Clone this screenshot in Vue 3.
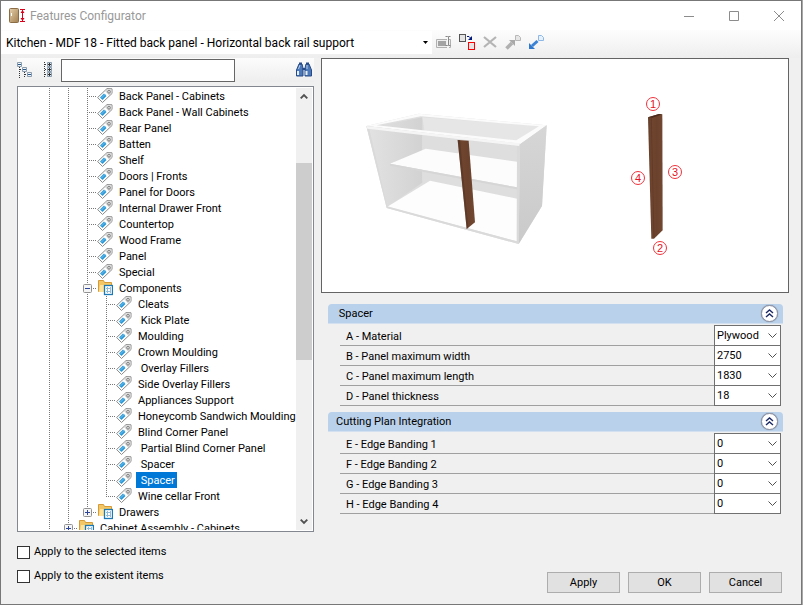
<template>
  <div class="window">
    <header class="title-bar">
      <svg class="app-icon" viewBox="0 0 18 16">
        <defs>
          <linearGradient id="door" x1="0" y1="0" x2="1" y2="1">
            <stop offset="0" stop-color="#e3cfab" />
            <stop offset="1" stop-color="#a37f4f" />
          </linearGradient>
        </defs>
        <rect x="0.5" y="0.5" width="9" height="14" rx="1" fill="url(#door)" stroke="#8a6c45" />
        <path d="M2.500 5v3" stroke="#fff" />
        <path d="M11 1.500h5M11 13.500h5M13.500 2v12" stroke="#d9001b" fill="none" />
        <path d="M11.500 5l2-3 2 3zM11.500 10l2 3 2-3z" fill="#d9001b" />
      </svg>
      <h1>Features Configurator</h1>
      <div class="window-buttons">
        <button aria-label="Minimize"><svg viewBox="0 0 10 10"><path d="M0 5.500h10" /></svg></button>
        <button aria-label="Maximize"><svg viewBox="0 0 10 10"><path d="M.5.5h9v9h-9z" /></svg></button>
        <button aria-label="Close"><svg viewBox="0 0 10 10"><path d="M0 0l10 10M10 0L0 10" /></svg></button>
      </div>
    </header>

    <div class="toolbar">
      <div class="config">
        <select v-model="config" aria-label="Configuration">
          <option>Kitchen - MDF 18 - Fitted back panel - Horizontal back rail support</option>
        </select>
        <svg viewBox="0 0 5 3"><path d="M0 0h5L2.500 3z" /></svg>
      </div>
      <button class="tool" aria-label="Rename">
        <svg viewBox="0 0 18 18">
          <path d="M12 5.500H1.500v8H12M14 13.500h1.500v-8H14" fill="#eee" stroke="#b0b0b0" />
          <rect x="3" y="7" width="8" height="5" fill="#a3a3a3" />
          <path d="M10.500 2.500h2l.5.500.5-.500h2M13.500 3v8M10.500 11.500h2l.5-.500.5.500h2" fill="none" stroke="#888" />
        </svg>
      </button>
      <button class="tool" aria-label="Replace">
        <svg viewBox="0 0 18 18">
          <rect x="1.500" y="0.500" width="6" height="7" fill="#e4e4e4" stroke="#555" />
          <rect x="10.500" y="8.500" width="6" height="7" fill="#e4e4e4" stroke="#f00" />
          <path d="M9 2.500h2l2 2" fill="none" stroke="#00187c" />
          <path d="M14 2v4h-4z" fill="#00187c" />
        </svg>
      </button>
      <button class="tool" aria-label="Delete">
        <svg viewBox="0 0 18 18"><path d="M3 3l12 10M15 3L3 13" stroke="#b4b4b4" stroke-width="2.200" /></svg>
      </button>
      <button class="tool" aria-label="Export">
        <svg viewBox="0 0 18 18">
          <path d="M2.500 14.500L8 9" stroke="#b0b0b0" stroke-width="3.500" />
          <path d="M5 6h6v6z" fill="#a9a9a9" />
          <path d="M11.500 1.500h3l2 2v3h-5z" fill="#e6e6e6" stroke="#b8b8b8" />
        </svg>
      </button>
      <button class="tool" aria-label="Import">
        <svg viewBox="0 0 18 18">
          <path d="M5 12l5.500-5" stroke="#3b83d6" stroke-width="3" />
          <path d="M2 9v6h6z" fill="#2f78ce" />
          <path d="M11.500 1.500h3l2 2v3h-5z" fill="#e6f1fc" stroke="#8db8e6" />
        </svg>
      </button>
    </div>

    <main class="content">
      <section class="left">
        <div class="search-bar">
          <button class="tool" aria-label="Collapse tree">
            <svg viewBox="0 0 18 18">
              <path d="M2.500 6v11M3 8.500h3M7.500 11v6M8 13.500h3" fill="none" stroke="#333" stroke-dasharray="1 1" />
              <g fill="#eef4fa" stroke="#8a9cab">
                <path d="M.5 1.500h4v4h-4zM5.500 6.500h4v4h-4zM10.500 11.500h4v4h-4z" />
              </g>
              <path d="M1 3.500h3M6 8.500h3M11 13.500h3" stroke="#245a8c" />
            </svg>
          </button>
          <button class="tool" aria-label="Expand tree">
            <svg viewBox="0 0 18 18">
              <path d="M5.500 1v16M6 3.500h3M6 8.500h3M6 13.500h3" fill="none" stroke="#333" stroke-dasharray="1 1" />
              <g fill="#dce6ee" stroke="#8a9cab">
                <path d="M8.500 1.500h4v4h-4zM8.500 6.500h4v4h-4zM8.500 11.500h4v4h-4z" />
              </g>
              <path d="M9 3.500h3M10.500 2v3M9 8.500h3M10.500 7v3M9 13.500h3M10.500 12v3" stroke="#333" />
            </svg>
          </button>
          <input v-model="search" type="text" aria-label="Search" />
          <button class="tool find" aria-label="Find">
            <svg viewBox="0 0 18 18">
              <path d="M4 3h3l1 4v8H1.500V9zM11 3h3l2.500 6v6H10V7z" fill="#4d79b8" stroke="#274b86" />
              <path d="M4 2.500h3M11 2.500h3M7.500 8h3" stroke="#274b86" stroke-width="2" />
              <path d="M3 10v4M11.500 10v4" stroke="#e4effc" stroke-width="2" />
              <path d="M5 4L3.500 8M12 4v4" stroke="#b7cfee" />
            </svg>
          </button>
        </div>

        <div class="tree">
          <ul>
            <li v-for="(node, index) in nodes" :key="index">
              <span
                v-for="depth in node.level"
                :key="depth"
                class="guide"
                :class="{ branch: depth === node.level, end: depth === node.level && node.last }"
              >
                <svg v-if="node.folder && depth === node.level" class="expander" viewBox="0 0 9 9">
                  <rect x="0.500" y="0.500" width="8" height="8" rx="1" fill="#f5f5f5" stroke="#919191" />
                  <path :d="node.open ? 'M2 4.500h5' : 'M2 4.500h5M4.500 2v5'" stroke="#2c4599" />
                </svg>
              </span>
              <svg v-if="node.folder" class="node-icon" viewBox="0 0 16 16">
                <path d="M1.500 11.500v-11h5l1 2h7v9z" fill="#f3c765" stroke="#d59b37" />
                <path d="M2 12l1-7h11v7z" fill="#ffe39a" />
                <rect x="7.500" y="5.500" width="8" height="9" fill="#fff" stroke="#1b7ab5" stroke-width="1.300" />
                <path d="M9 8.500h5M9 11.500h5M10.500 7v6M13.500 7v6" stroke="#93bcd9" />
              </svg>
              <svg v-else class="node-icon" viewBox="0 0 16 16">
                <path d="M.6 9.500L10 .6l5 .2v4.700L5.500 14.500z" fill="#fff" stroke="#8a8a8a" />
                <path d="M8 3l2.500-1.800 4 .3v3.800L12 7.500z" fill="#d6d6d6" />
                <circle cx="12" cy="3.800" r="1.300" fill="#fff" stroke="#777" />
                <path d="M3 9.500L7 5.500 9.500 8l-4 4z" fill="#2b98d8" />
                <path d="M4.500 10l4-4" stroke="#75c3ef" />
              </svg>
              <span class="label" :class="{ selected: node.selected }">{{ node.text }}</span>
            </li>
          </ul>
          <div class="scrollbar">
            <svg viewBox="0 0 17 17"><path d="M5 10.500l3.500-3.500 3.500 3.500" /></svg>
            <div class="track"><div class="thumb"></div></div>
            <svg viewBox="0 0 17 17"><path d="M5 6.500l3.500 3.500 3.500-3.500" /></svg>
          </div>
        </div>

        <div class="checks">
          <label><input v-model="applySelected" type="checkbox" />Apply to the selected items</label>
          <label><input v-model="applyExistent" type="checkbox" />Apply to the existent items</label>
        </div>
      </section>

      <section class="right">
        <div class="preview">
          <svg viewBox="322 59 466 233">
            <defs>
              <linearGradient id="side" x1="0" y1="0" x2="0" y2="1">
                <stop offset="0" stop-color="#d6d6d6" />
                <stop offset="1" stop-color="#cacaca" />
              </linearGradient>
              <linearGradient id="inner" x1="0" y1="0" x2="1" y2="0">
                <stop offset="0" stop-color="#e2e2e2" />
                <stop offset="1" stop-color="#d2d2d2" />
              </linearGradient>
              <linearGradient id="wood" x1="0" y1="0" x2="1" y2="0">
                <stop offset="0" stop-color="#65402b" />
                <stop offset="0.300" stop-color="#70452f" />
                <stop offset="0.600" stop-color="#6a412c" />
                <stop offset="1" stop-color="#724832" />
              </linearGradient>
            </defs>
            <g transform="translate(350 90) scale(0.333333)">
              <path d="M49 108l157-37 384 35-14 242-70 114-396-108z" fill="#dedede" />
              <path d="M56 114l161-32v196L112 350z" fill="url(#inner)" />
              <path d="M217 82l360 26-68 47-285-30z" fill="#e6e6e6" />
              <path d="M217 134l284 35v158l-284-55z" fill="#dedede" />
              <path d="M240 272l261 54v128L112 350z" fill="#fdfdfd" />
              <path d="M120 221l107-45 274 39v77z" fill="#fcfcfc" />
              <path d="M120 221l381 71v6l-381-71z" fill="#d6d6d6" />
              <path d="M49 108l157-37 384 35-80 57zM80 106l419 45 68-42-355-30z" fill="#fbfbfb" fill-rule="evenodd" />
              <path d="M510 163l80-57-14 242-70 114z" fill="url(#side)" />
              <path d="M49 108l461 53-4 301-396-108zM58 117l54 232 388 105 1-286z" fill="#dadada" fill-rule="evenodd" />
              <path d="M49 108l461 52-3 8-455-52z" fill="#f5f5f5" />
              <path d="M323 150l33 2 19 245-25 20z" fill="url(#wood)" />
              <path d="M323 150l27 267 5-4-25-263z" fill="#50301f" opacity="0.500" />
            </g>
            <g transform="translate(600 80) scale(0.333333)">
              <path d="M144 112l33-10 10 1 1 348-26 25h-8z" fill="url(#wood)" />
              <path d="M144 112l33-10 10 1-30 10z" fill="#4a2b1d" />
              <path d="M154 114l8 360" stroke="#5a3725" stroke-width="2" />
            </g>
            <g v-for="mark in marks" :key="mark.text" class="mark">
              <circle :cx="mark.x" :cy="mark.y" r="6.500" />
              <text :x="mark.x" :y="mark.y + 4">{{ mark.text }}</text>
            </g>
          </svg>
        </div>

        <div v-for="group in groups" :key="group.title" class="group">
          <div class="group-header">
            <h2>{{ group.title }}</h2>
            <button :aria-label="'Collapse ' + group.title">
              <svg viewBox="0 0 9 9"><path d="M1 4l3.500-3L8 4M1 8l3.500-3L8 8" /></svg>
            </button>
          </div>
          <div v-for="field in group.fields" :key="field.id" class="field">
            <label :for="field.id">{{ field.label }}</label>
            <div class="dropdown">
              <select :id="field.id" v-model="field.value">
                <option>{{ field.value }}</option>
              </select>
              <svg viewBox="0 0 9 5"><path d="M.5.5l4 4 4-4" /></svg>
            </div>
          </div>
        </div>

        <footer>
          <button>Apply</button>
          <button>OK</button>
          <button>Cancel</button>
        </footer>
      </section>
    </main>
  </div>
</template>

<script setup>
import { ref } from 'vue';

const config = ref('Kitchen - MDF 18 - Fitted back panel - Horizontal back rail support');
const search = ref('');
const applySelected = ref(false);
const applyExistent = ref(false);

const nodes = ref([
  { level: 3, text: 'Back Panel - Cabinets' },
  { level: 3, text: 'Back Panel - Wall Cabinets' },
  { level: 3, text: 'Rear Panel' },
  { level: 3, text: 'Batten' },
  { level: 3, text: 'Shelf' },
  { level: 3, text: 'Doors | Fronts' },
  { level: 3, text: 'Panel for Doors' },
  { level: 3, text: 'Internal Drawer Front' },
  { level: 3, text: 'Countertop' },
  { level: 3, text: 'Wood Frame' },
  { level: 3, text: 'Panel' },
  { level: 3, text: 'Special' },
  { level: 3, text: 'Components', folder: true, open: true },
  { level: 4, text: 'Cleats' },
  { level: 4, text: ' Kick Plate' },
  { level: 4, text: 'Moulding' },
  { level: 4, text: 'Crown Moulding' },
  { level: 4, text: ' Overlay Fillers' },
  { level: 4, text: 'Side Overlay Fillers' },
  { level: 4, text: 'Appliances Support' },
  { level: 4, text: 'Honeycomb Sandwich Moulding' },
  { level: 4, text: 'Blind Corner Panel' },
  { level: 4, text: ' Partial Blind Corner Panel' },
  { level: 4, text: ' Spacer' },
  { level: 4, text: ' Spacer', selected: true },
  { level: 4, text: 'Wine cellar Front', last: true },
  { level: 3, text: 'Drawers', folder: true, last: true },
  { level: 2, text: 'Cabinet Assembly - Cabinets', folder: true }
]);

const marks = [
  { text: '1', x: 653, y: 104 },
  { text: '2', x: 660, y: 248 },
  { text: '3', x: 675, y: 172 },
  { text: '4', x: 638, y: 178 }
];

const groups = ref([
  {
    title: ' Spacer',
    fields: [
      { id: 'material', label: 'A - Material', value: 'Plywood' },
      { id: 'max-width', label: 'B - Panel maximum width', value: '2750' },
      { id: 'max-length', label: 'C - Panel maximum length', value: '1830' },
      { id: 'thickness', label: 'D - Panel thickness', value: '18' }
    ]
  },
  {
    title: 'Cutting Plan Integration',
    fields: [
      { id: 'edge-1', label: 'E - Edge Banding 1', value: '0' },
      { id: 'edge-2', label: 'F - Edge Banding 2', value: '0' },
      { id: 'edge-3', label: 'G - Edge Banding 3', value: '0' },
      { id: 'edge-4', label: 'H - Edge Banding 4', value: '0' }
    ]
  }
]);
</script>

<style>
body {
  margin: 0;
  background: #a8a8a8;
}
</style>

<style scoped>
* {
  box-sizing: border-box;
}

.window {
  display: flex;
  flex-direction: column;
  height: 100vh;
  margin-right: 1px;
  border: 1px solid #777;
  background: #f0f0f0;
  color: #000;
  font-family: Roboto, "Liberation Sans", Arial, sans-serif;
  font-size: 11px;
  line-height: 16px;
}

button,
select,
input {
  margin: 0;
  padding: 0;
  border: 0;
  border-radius: 0;
  background: none;
  color: inherit;
  font: inherit;
}

svg {
  display: block;
}

h1,
h2 {
  margin: 0;
  font-size: inherit;
  font-weight: normal;
}

/* Title bar */
.title-bar {
  display: flex;
  align-items: center;
  flex: none;
  height: 29px;
  padding-left: 8px;
  background: #fff;
}

.app-icon {
  width: 18px;
  height: 16px;
}

.title-bar h1 {
  margin-left: 3px;
  color: #999;
  font-size: 12px;
}

.window-buttons {
  display: flex;
  margin-left: auto;
}

.window-buttons button {
  display: grid;
  place-items: center;
  width: 45px;
  height: 28px;
}

.window-buttons svg {
  width: 10px;
  height: 10px;
  fill: none;
  stroke: #8c8c8c;
}

/* Toolbar */
.toolbar {
  display: flex;
  align-items: flex-start;
  flex: none;
  height: 28px;
  padding-top: 1px;
  background: linear-gradient(#fdfdfd, #eee);
}

.config {
  position: relative;
  width: 431px;
  height: 23px;
  margin-right: 3px;
  background: #fff;
}

.config select {
  width: 100%;
  height: 100%;
  padding-left: 5px;
  appearance: none;
  font-size: 12px;
}

.config svg {
  position: absolute;
  top: 10px;
  right: 4px;
  width: 5px;
  height: 3px;
}

.tool {
  width: 18px;
  height: 23px;
  margin-right: 5px;
}

.tool svg {
  width: 18px;
  height: 18px;
}

/* Content */
.content {
  display: flex;
  flex: 1;
  min-height: 0;
  padding: 0 12px 0 16px;
}

.left {
  display: flex;
  flex-direction: column;
  flex: none;
  width: 297px;
  margin-right: 7px;
}

.search-bar {
  display: flex;
  align-items: center;
  flex: none;
  height: 24px;
  margin-bottom: 4px;
  background: linear-gradient(#fcfcfc, #eee);
}

.search-bar input {
  width: 174px;
  height: 23px;
  padding: 0 4px;
  border: 1px solid #666;
  background: #fff;
}

.search-bar .tool {
  display: grid;
  place-items: center;
  margin-right: 4px;
}

.search-bar .find {
  margin-right: 1px;
  margin-left: auto;
}

/* Tree */
.tree {
  display: flex;
  flex: 1;
  min-height: 0;
  overflow: hidden;
  padding: 1px;
  border: 1px solid #828790;
  background: #fff;
}

.tree ul {
  flex: 1;
  min-width: 0;
  margin: 0;
  padding: 0 0 0 21px;
  overflow: hidden;
  list-style: none;
}

.tree li {
  display: flex;
  height: 16px;
}

.guide {
  display: grid;
  place-items: center;
  flex: none;
  width: 19px;
  height: 16px;
  background: repeating-linear-gradient(#777 0 1px, transparent 1px 2px) 9px 0 / 1px 16px no-repeat;
}

.guide.branch {
  background:
    repeating-linear-gradient(#777 0 1px, transparent 1px 2px) 9px 0 / 1px 16px no-repeat,
    repeating-linear-gradient(90deg, #777 0 1px, transparent 1px 2px) 9px 8px / 10px 1px no-repeat;
}

.guide.end {
  background-size: 1px 9px, 10px 1px;
}

.expander {
  width: 9px;
  height: 9px;
}

.node-icon {
  flex: none;
  width: 16px;
  height: 16px;
  margin-right: 4px;
}

.label {
  height: 16px;
  padding: 0 2px;
  line-height: 18px;
  white-space: pre;
}

.label.selected {
  background: #0078d7;
  color: #fff;
}

.scrollbar {
  display: flex;
  flex-direction: column;
  width: 16px;
  background: #f0f0f0;
}

.scrollbar svg {
  width: 16px;
  height: 17px;
  fill: none;
  stroke: #505050;
  stroke-width: 2;
}

.track {
  display: grid;
  flex: 1;
  grid-template-rows: 58fr 197fr 153fr;
}

.thumb {
  grid-row: 2;
  background: #cdcdcd;
}

/* Check boxes */
.checks {
  flex: none;
  padding: 12px 0;
}

.checks label {
  display: flex;
  align-items: center;
  height: 16px;
  margin-bottom: 8px;
  line-height: 18px;
}

.checks input {
  width: 13px;
  height: 13px;
  margin-right: 4px;
  border: 1px solid #333;
  background: #fff;
  appearance: none;
}

.checks input:checked {
  background: #0078d7;
}

/* Right side */
.right {
  display: flex;
  flex-direction: column;
  flex: 1;
  min-width: 0;
}

.preview {
  margin-bottom: 11px;
  border: 1px solid #646464;
  background: #fff;
}

.preview svg {
  width: 100%;
}

.mark circle {
  fill: none;
  stroke: #f0323c;
}

.mark text {
  fill: #e8101c;
  font-family: "Liberation Sans", Arial, sans-serif;
  font-size: 11px;
  text-anchor: middle;
}

.group {
  margin: 0 6px 6px 7px;
}

.group-header {
  display: flex;
  align-items: center;
  justify-content: space-between;
  height: 20px;
  margin-bottom: 2px;
  padding: 0 5px 0 8px;
  border-bottom: 1px solid #d3e0ef;
  border-radius: 4px 4px 0 0;
  background: #b9d1ea;
}

.group-header h2 {
  white-space: pre;
}

.group-header button {
  display: grid;
  place-items: center;
  width: 17px;
  height: 17px;
  border: 1px solid #8d93a5;
  border-radius: 50%;
  background: #fff;
  box-shadow: 0 0 1px #6d7386;
}

.group-header svg {
  width: 9px;
  height: 9px;
  fill: none;
  stroke: #1c2a66;
  stroke-width: 1.400;
}

.field {
  display: flex;
  height: 20px;
  margin: 0 2px 0 12px;
  border-bottom: 1px solid #a0a0a0;
}

.field label {
  flex: 1;
  padding: 3px 0 0 6px;
}

.dropdown {
  position: relative;
  width: 67px;
  height: 21px;
  margin-top: -1px;
}

.dropdown select {
  width: 100%;
  height: 100%;
  padding: 0 18px 0 2px;
  border: 1px solid #707070;
  background: #fff;
  appearance: none;
}

.dropdown svg {
  position: absolute;
  top: 8px;
  right: 4px;
  width: 9px;
  height: 5px;
  fill: none;
  stroke: #505050;
  pointer-events: none;
}

footer {
  display: flex;
  justify-content: flex-end;
  gap: 8px;
  margin: auto 7px 11px 0;
}

footer button {
  width: 73px;
  height: 21px;
  border: 1px solid #adadad;
  background: #e1e1e1;
}
</style>
